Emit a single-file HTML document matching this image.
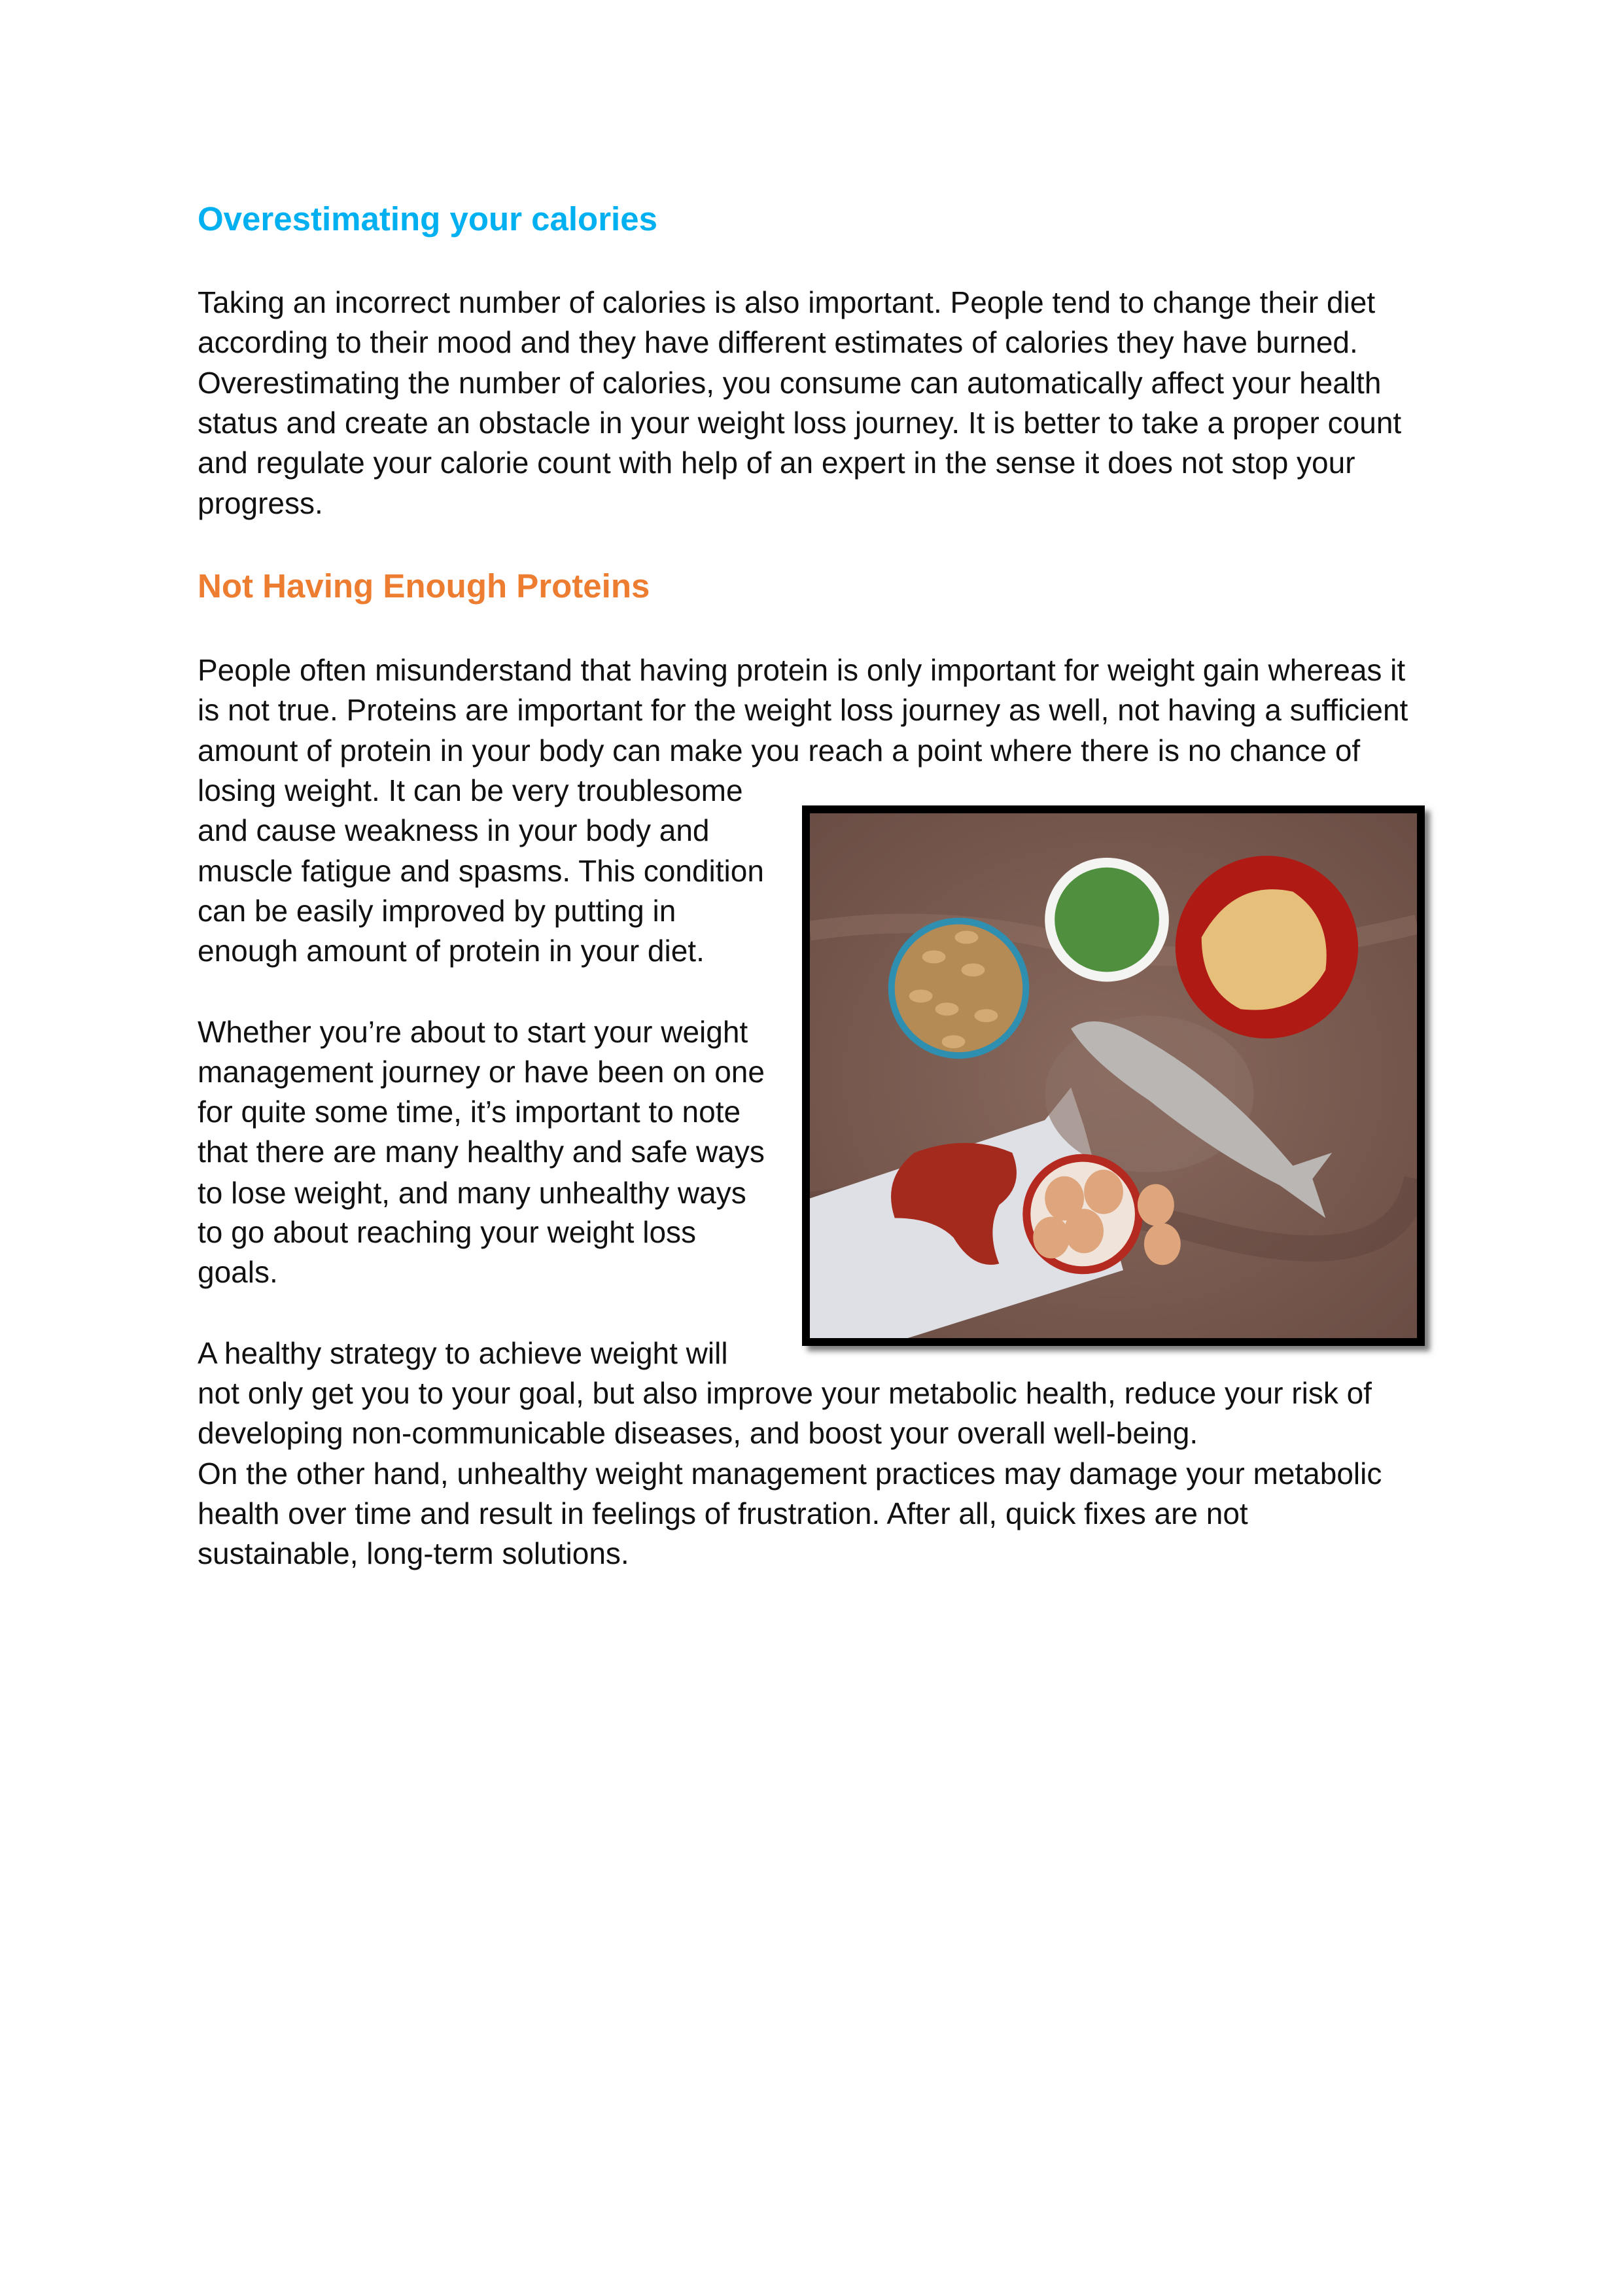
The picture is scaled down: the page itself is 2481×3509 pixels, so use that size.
<!DOCTYPE html>
<html><head><meta charset="utf-8"><style>
html,body{margin:0;padding:0;background:#fff;}
body{width:2481px;height:3509px;position:relative;overflow:hidden;font-family:"Liberation Sans",sans-serif;color:#111;}
.l{position:absolute;left:302px;font-size:46px;line-height:61px;white-space:nowrap;margin-top:-4px;}
.h{position:absolute;left:302px;font-size:51px;line-height:70px;font-weight:bold;white-space:nowrap;margin-top:-4px;}
.frame{position:absolute;left:1226px;top:1231px;width:952px;height:826px;box-sizing:border-box;border:12px solid #000;box-shadow:8px 8px 8px rgba(0,0,0,0.5);background:#7a5b50;overflow:hidden;}
</style></head><body>
<div class="h" style="top:304px;color:#00b0f0">Overestimating your calories</div>
<div class="l" style="top:436px">Taking an incorrect number of calories is also important. People tend to change their diet</div>
<div class="l" style="top:497px">according to their mood and they have different estimates of calories they have burned.</div>
<div class="l" style="top:559px">Overestimating the number of calories, you consume can automatically affect your health</div>
<div class="l" style="top:620px">status and create an obstacle in your weight loss journey. It is better to take a proper count</div>
<div class="l" style="top:681px">and regulate your calorie count with help of an expert in the sense it does not stop your</div>
<div class="l" style="top:743px">progress.</div>
<div class="h" style="top:865px;color:#ed7d31">Not Having Enough Proteins</div>
<div class="l" style="top:998px">People often misunderstand that having protein is only important for weight gain whereas it</div>
<div class="l" style="top:1059px">is not true. Proteins are important for the weight loss journey as well, not having a sufficient</div>
<div class="l" style="top:1121px">amount of protein in your body can make you reach a point where there is no chance of</div>
<div class="l" style="top:1182px">losing weight. It can be very troublesome</div>
<div class="l" style="top:1243px">and cause weakness in your body and</div>
<div class="l" style="top:1305px">muscle fatigue and spasms. This condition</div>
<div class="l" style="top:1366px">can be easily improved by putting in</div>
<div class="l" style="top:1427px">enough amount of protein in your diet.</div>
<div class="l" style="top:1551px">Whether you’re about to start your weight</div>
<div class="l" style="top:1612px">management journey or have been on one</div>
<div class="l" style="top:1673px">for quite some time, it’s important to note</div>
<div class="l" style="top:1734px">that there are many healthy and safe ways</div>
<div class="l" style="top:1797px">to lose weight, and many unhealthy ways</div>
<div class="l" style="top:1857px">to go about reaching your weight loss</div>
<div class="l" style="top:1918px">goals.</div>
<div class="l" style="top:2042px">A healthy strategy to achieve weight will</div>
<div class="l" style="top:2103px">not only get you to your goal, but also improve your metabolic health, reduce your risk of</div>
<div class="l" style="top:2164px">developing non-communicable diseases, and boost your overall well-being.</div>
<div class="l" style="top:2226px">On the other hand, unhealthy weight management practices may damage your metabolic</div>
<div class="l" style="top:2287px">health over time and result in feelings of frustration. After all, quick fixes are not</div>
<div class="l" style="top:2348px">sustainable, long-term solutions.</div>

<div class="frame">
<svg width="928" height="802" viewBox="0 0 930 804" preserveAspectRatio="none" xmlns="http://www.w3.org/2000/svg">
<defs><radialGradient id="bg" cx="50%" cy="50%" r="70%"><stop offset="0" stop-color="#8a6a5e"/><stop offset="1" stop-color="#6a4d44"/></radialGradient></defs>
<rect width="930" height="804" fill="url(#bg)"/>
<path d="M0 180 Q200 150 400 200 T930 170" stroke="#957669" stroke-width="30" fill="none" opacity=".4"/>
<path d="M0 600 Q300 560 600 640 T930 560" stroke="#5d423a" stroke-width="40" fill="none" opacity=".4"/>
<polygon points="0,590 360,470 400,420 420,480 480,700 150,804 0,804" fill="#dfe0e6"/>
<path d="M160 520 Q240 490 310 520 Q330 570 290 600 Q270 640 290 690 Q250 700 220 650 Q190 620 130 620 Q110 560 160 520Z" fill="#a52a1e"/>
<circle cx="228" cy="268" r="108" fill="#2f8fb0"/><circle cx="228" cy="268" r="98" fill="#b48a55"/>
<g fill="#d3aa73"><ellipse cx="190" cy="220" rx="18" ry="10"/><ellipse cx="250" cy="240" rx="18" ry="10"/><ellipse cx="210" cy="300" rx="18" ry="10"/><ellipse cx="270" cy="310" rx="18" ry="10"/><ellipse cx="170" cy="280" rx="18" ry="10"/><ellipse cx="240" cy="190" rx="18" ry="10"/><ellipse cx="220" cy="350" rx="18" ry="10"/></g>
<circle cx="455" cy="163" r="95" fill="#f4f4f2"/><circle cx="455" cy="163" r="80" fill="#4f8f3e"/>
<circle cx="700" cy="205" r="140" fill="#b01a14"/>
<path d="M600 190 Q650 100 740 120 Q800 160 790 240 Q750 310 660 300 Q600 270 600 190Z" fill="#e6c07a"/>
<ellipse cx="520" cy="430" rx="160" ry="120" fill="#8c7066" opacity=".6"/>
<path d="M400 330 Q440 300 520 350 Q640 420 740 540 L800 520 L770 560 L790 620 L720 570 Q620 520 520 440 Q430 380 400 330Z" fill="#b9b6b4"/>
<circle cx="418" cy="614" r="92" fill="#b52a20"/><circle cx="418" cy="614" r="80" fill="#f0e4da"/>
<g fill="#dfa67d"><ellipse cx="390" cy="590" rx="30" ry="34"/><ellipse cx="450" cy="580" rx="30" ry="34"/><ellipse cx="420" cy="640" rx="30" ry="34"/><ellipse cx="370" cy="650" rx="28" ry="32"/><ellipse cx="530" cy="600" rx="28" ry="32"/><ellipse cx="540" cy="660" rx="28" ry="32"/></g>
</svg>
</div>
</body></html>
